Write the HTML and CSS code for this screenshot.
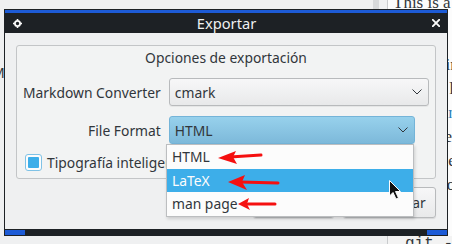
FILE: index.html
```html
<!DOCTYPE html>
<html lang="es">
<head>
<meta charset="utf-8">
<title>Exportar</title>
<link rel="stylesheet" href="styles.css">
</head>
<body>
<div class="desk">
  <div class="pane-left">
    <p class="bg-line bg-m">M</p>
    <p class="bg-line bg-l">l</p>
  </div>
  <div class="splitter"><div class="handle"></div></div>
  <div class="editor">
    <p class="ed-line ed-first">This is a sample document</p>
    <p class="ed-line">written in a lightweight</p>
    <p class="ed-line">markup language.</p>
    <p class="ed-line ed-link">See Example</p>
    <p class="ed-line">for more information</p>
    <p class="ed-line">about the tool</p>
    <p class="ed-line">and the others</p>
    <pre class="ed-code">git -</pre>
  </div>
</div>

<div class="dialog">
  <div class="accent"></div>
  <div class="titlebar">
    <span class="gear">
      <svg width="9" height="9" viewBox="0 0 9 9"><circle cx="4.5" cy="4.5" r="2.6" fill="none" stroke="#fcfcfc" stroke-width="1.8"/><rect x="3.7" y="0" width="1.6" height="1.4" fill="#fcfcfc"/><rect x="3.7" y="7.6" width="1.6" height="1.4" fill="#fcfcfc"/><rect x="0" y="3.7" width="1.4" height="1.6" fill="#fcfcfc"/><rect x="7.6" y="3.7" width="1.4" height="1.6" fill="#fcfcfc"/></svg>
    </span>
    <span class="title">Exportar</span>
    <span class="close">
      <svg width="8" height="8" viewBox="0 0 8 8"><path d="M0.8 0.8 L7.2 7.2 M7.2 0.8 L0.8 7.2" stroke="#fcfcfc" stroke-width="1.9" stroke-linecap="square"/></svg>
    </span>
  </div>
  <div class="body">
    <div class="group">
      <div class="group-title">Opciones de exportación</div>
      <div class="form">
        <span class="label">Markdown Converter</span>
        <div class="combo">
          <span>cmark</span>
          <svg class="chev" width="10" height="6" viewBox="0 0 10 6"><path d="M0.5 0.5 L5 5 L9.5 0.5" fill="none" stroke="#31363b" stroke-width="1"/></svg>
        </div>
        <span class="label">File Format</span>
        <div class="combo combo-active">
          <span>HTML</span>
          <svg class="chev" width="10" height="6" viewBox="0 0 10 6"><path d="M0.5 0.5 L5 5 L9.5 0.5" fill="none" stroke="#31363b" stroke-width="1"/></svg>
        </div>
      </div>
      <div class="check">
        <span class="box"><span class="fill"></span></span>
        <span>Tipografía inteligente</span>
      </div>
    </div>
    <div class="buttons">
      <button class="btn btn-export">Exportar</button>
      <button class="btn btn-cancel"><svg width="16" height="16" viewBox="0 0 16 16"><circle cx="8" cy="8" r="6" fill="none" stroke="#da4453" stroke-width="1.5"/><path d="M5 5 L11 11" stroke="#da4453" stroke-width="1.5"/></svg><span>Cancelar</span></button>
    </div>
  </div>
  <div class="bottombar"><span class="corner"></span><span class="corner"></span></div>

  <div class="popup">
    <div class="item">HTML</div>
    <div class="item item-sel">LaTeX</div>
    <div class="item">man page</div>
  </div>
</div>

<svg class="overlay" width="452" height="244" viewBox="0 0 452 244">
  <g stroke="#f51010" stroke-width="3" stroke-linecap="round" fill="none">
    <path d="M261 155 L230 157"/>
    <path d="M278 183 L240 182"/>
    <path d="M275 204 L248 204"/>
  </g>
  <g fill="#f51010">
    <path d="M218 158 L236 151 L233 157 L237 164 Z"/>
    <path d="M228 182 L245 175 L242 182 L247 190 Z"/>
    <path d="M238 204 L249 198 L247 204 L250 210 Z"/>
  </g>
  <path d="M389.5 180.5 L389.5 196 L393 192.5 L396 199 L398.5 198 L395.5 191.5 L400.5 191.5 Z" fill="#111" stroke="#fcfcfc" stroke-width="1"/>
</svg>
</body>
</html>
```
FILE: styles.css
```css
* { box-sizing: border-box; margin: 0; padding: 0; }
html, body { width: 452px; height: 244px; overflow: hidden; }
body {
  position: relative;
  background: #eff0f1;
  font-family: "Noto Sans", sans-serif;
  font-size: 13.85px;
  color: #31363b;
}

/* background application */
.desk { display: flex; height: 244px; }
.pane-left { flex: 0 0 373px; background: #eff0f1; padding-top: 64px; overflow: hidden; }
.bg-line { font-family: "Noto Sans", sans-serif; font-size: 14px; line-height: 18px; margin-left: -8px; color: #31363b; }
.bg-l { margin-top: 78px; }
.splitter { flex: 0 0 15px; background: #eff0f1; border-right: 1px solid #c9cbcd; }
.handle { width: 6px; height: 40px; background: #d7d9db; }
.editor {
  flex: 1 1 auto;
  min-width: 0;
  overflow: hidden;
  background: #fcfcfc;
  display: flex;
  flex-direction: column;
  font-family: "Liberation Serif", serif;
  font-size: 17px;
  color: #31363b;
  white-space: nowrap;
}
.ed-line { padding-left: 5px; line-height: 24px; }
.ed-first { margin-top: -9px; margin-bottom: 38px; }
.ed-link { color: #2980b9; }
.ed-code {
  margin-top: auto;
  margin-bottom: -9px;
  padding-left: 17px;
  font-family: "Liberation Mono", monospace;
  font-size: 16px;
  line-height: 17px;
  background: #f3f3f3;
  color: #31363b;
}

/* dialog window */
.dialog {
  position: absolute;
  left: 4px;
  top: 9px;
  width: 444px;
  height: 227px;
  background: #1d2125;
  padding: 1px 1px 0 1px;
  display: flex;
  flex-direction: column;
}
.accent { height: 3px; background: #1d5bd6; }
.titlebar {
  height: 20px;
  display: grid;
  grid-template-columns: 1fr auto 1fr;
  align-items: center;
  padding: 0 7px 0 8px;
  color: #eff0f1;
  font-size: 14.67px;
  line-height: 20px;
}
.gear { justify-self: start; display: flex; }
.close { justify-self: end; display: flex; }
.body {
  flex: 1;
  background: #eff0f1;
  padding: 12px 11px 0 11px;
  display: flex;
  flex-direction: column;
}
.group {
  height: 134px;
  border: 1px solid #c3c5c7;
  border-radius: 3px;
  background: #f2f3f3;
  padding: 3px 6px 0 6px;
}
.group-title { text-align: center; line-height: 18px; }
.form {
  display: grid;
  grid-template-columns: auto 1fr;
  column-gap: 8px;
  row-gap: 10px;
  align-items: center;
  margin-top: 11px;
}
.label { text-align: right; white-space: nowrap; }
.combo {
  height: 28px;
  border: 1px solid #b8babc;
  border-radius: 3px;
  background: linear-gradient(#f7f7f8, #e8e9ea);
  display: flex;
  align-items: center;
  justify-content: space-between;
  padding: 0 6px 0 5px;
  box-shadow: 0 1px 0 rgba(0, 0, 0, 0.05);
}
.combo-active {
  width: 246px;
  border-color: #74b4d8;
  background: linear-gradient(#97d1ec, #7db9da);
}
.chev { display: block; }
.check {
  display: flex;
  align-items: center;
  gap: 5px;
  margin-top: 9px;
  padding-left: 2px;
  white-space: nowrap;
}
.box {
  width: 17px;
  height: 17px;
  border: 1px solid #7fc2e6;
  border-radius: 3px;
  background: #fcfcfc;
  padding: 2px;
  display: flex;
}
.fill { flex: 1; background: #3daee9; border-radius: 1px; }
.buttons {
  display: flex;
  justify-content: flex-end;
  gap: 9px;
  margin-top: 8px;
}
.btn {
  height: 31px;
  border: 1px solid #b8babc;
  border-radius: 3px;
  background: linear-gradient(#f7f7f8, #e8e9ea);
  font: inherit;
  color: inherit;
  display: flex;
  align-items: center;
  justify-content: center;
  gap: 6px;
  box-shadow: 0 1px 1px rgba(0, 0, 0, 0.1);
}
.btn-export { width: 81px; }
.btn-cancel { width: 93px; padding-right: 6px; }
.bottombar {
  height: 7px;
  padding-top: 1px;
  display: flex;
  justify-content: space-between;
}
.corner { width: 20px; height: 5px; background: #1d5bd6; }

/* dropdown popup */
.popup {
  position: absolute;
  left: 162px;
  top: 135px;
  width: 248px;
  border: 1px solid #bcbec0;
  background: #fcfcfc;
  box-shadow: 1px 2px 3px rgba(0, 0, 0, 0.15);
}
.item { height: 24px; line-height: 24px; padding-left: 5px; }
.item-sel { height: 23px; line-height: 23px; background: #3daee9; color: #fcfcfc; }

.overlay { position: absolute; left: 0; top: 0; pointer-events: none; }
```
